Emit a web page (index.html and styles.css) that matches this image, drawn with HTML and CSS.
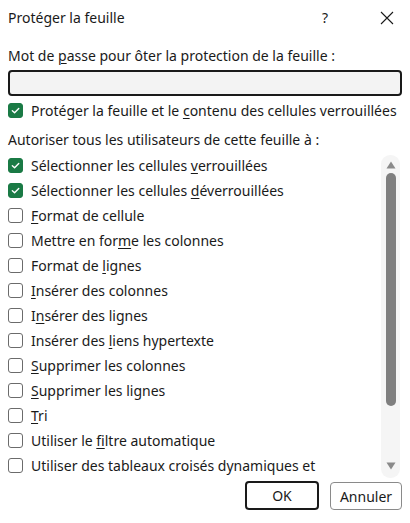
FILE: index.html
```html
<!DOCTYPE html>
<html lang="fr">
<head>
<meta charset="utf-8">
<title>Protéger la feuille</title>
<link rel="stylesheet" href="styles.css">
</head>
<body>
<div class="dialog">
  <div class="titlebar">
    <span class="title">Protéger la feuille</span>
    <span class="help">?</span>
    <span class="close">
      <svg width="14" height="14" viewBox="0 0 14 14"><path d="M1 1 L13 13 M13 1 L1 13" stroke="#1a1a1a" stroke-width="1.1" fill="none"/></svg>
    </span>
  </div>

  <div class="label">Mot de <u>p</u>asse pour ôter la protection de la feuille :</div>
  <div class="input"></div>

  <label class="check-row main-check">
    <span class="box checked"><svg viewBox="0 0 14 14"><path d="M3.6 7.2 L6 9.4 L10.5 4.8" stroke="#fff" stroke-width="1.5" fill="none" stroke-linecap="round" stroke-linejoin="round"/></svg></span>
    <span>Protéger la feuille et le <u>c</u>ontenu des cellules verrouillées</span>
  </label>

  <div class="label allow">Autoriser tous les utilisateurs de cette feuille à :</div>

  <div class="list">
    <div class="items">
      <div class="check-row"><span class="box checked"><svg viewBox="0 0 14 14"><path d="M3.6 7.2 L6 9.4 L10.5 4.8" stroke="#fff" stroke-width="1.5" fill="none" stroke-linecap="round" stroke-linejoin="round"/></svg></span><span>Sélectionner les cellules <u>v</u>errouillées</span></div>
      <div class="check-row"><span class="box checked"><svg viewBox="0 0 14 14"><path d="M3.6 7.2 L6 9.4 L10.5 4.8" stroke="#fff" stroke-width="1.5" fill="none" stroke-linecap="round" stroke-linejoin="round"/></svg></span><span>Sélectionner les cellules <u>d</u>éverrouillées</span></div>
      <div class="check-row"><span class="box"></span><span><u>F</u>ormat de cellule</span></div>
      <div class="check-row"><span class="box"></span><span>Mettre en for<u>m</u>e les colonnes</span></div>
      <div class="check-row"><span class="box"></span><span>Format de <u>l</u>ignes</span></div>
      <div class="check-row"><span class="box"></span><span><u>I</u>nsérer des colonnes</span></div>
      <div class="check-row"><span class="box"></span><span>I<u>n</u>sérer des lignes</span></div>
      <div class="check-row"><span class="box"></span><span>Insérer des <u>l</u>iens hypertexte</span></div>
      <div class="check-row"><span class="box"></span><span><u>S</u>upprimer les colonnes</span></div>
      <div class="check-row"><span class="box"></span><span><u>S</u>upprimer les lignes</span></div>
      <div class="check-row"><span class="box"></span><span><u>T</u>ri</span></div>
      <div class="check-row"><span class="box"></span><span>Utiliser le <u>f</u>iltre automatique</span></div>
      <div class="check-row"><span class="box"></span><span>Utiliser des tableaux croisés dynamiques et</span></div>
    </div>
    <div class="scrollbar">
      <svg class="arrow" width="10" height="8" viewBox="0 0 10 8"><path d="M5 0.5 L9.5 7.5 L0.5 7.5 Z" fill="#8a8a8a"/></svg>
      <div class="track"><div class="thumb"></div></div>
      <svg class="arrow" width="10" height="8" viewBox="0 0 10 8"><path d="M0.5 0.5 L9.5 0.5 L5 7.5 Z" fill="#8a8a8a"/></svg>
    </div>
  </div>

  <div class="buttons">
    <button class="btn primary">OK</button>
    <button class="btn">Annuler</button>
  </div>
</div>
</body>
</html>
```

FILE: styles.css
```css
html, body {
  margin: 0;
  padding: 0;
  background: #fff;
}

.dialog {
  width: 410px;
  height: 523px;
  box-sizing: border-box;
  padding: 0 8px;
  font-family: "Noto Sans", "Open Sans", sans-serif;
  font-size: 14px;
  color: #1a1a1a;
  display: flex;
  flex-direction: column;
}

u {
  text-decoration-thickness: 1px;
  text-underline-offset: 2px;
}

.titlebar {
  height: 35px;
  display: flex;
  align-items: center;
}

.title {
  flex: 1;
  line-height: 1;
}

.help {
  width: 14px;
  font-size: 14px;
  margin-right: 44px;
}

.close {
  width: 22px;
  display: flex;
  align-items: center;
}

.label {
  height: 20px;
  line-height: 20px;
  margin-top: 11px;
}

.input {
  height: 22px;
  margin-top: 4px;
  border: 2px solid #1a1a1a;
  border-radius: 4px;
  background: #f3f3f3;
}

.check-row {
  display: flex;
  align-items: center;
  gap: 8px;
  height: 25px;
  white-space: nowrap;
}

.main-check {
  margin-top: 2px;
}

.label.allow {
  margin-top: 7px;
}

.box {
  width: 13px;
  height: 13px;
  flex: none;
  border: 1px solid #6b6b6b;
  border-radius: 3px;
  background: #fff;
  display: flex;
}

.box.checked {
  background: #1a7a45;
  border-color: #1a7a45;
}

.box svg {
  width: 13px;
  height: 13px;
}

.list {
  margin-top: 3px;
  display: flex;
  height: 325px;
}

.items {
  flex: 1;
  overflow: hidden;
}

.scrollbar {
  width: 19px;
  margin-right: 2px;
  margin-top: 2px;
  background: #f5f5f5;
  border-radius: 9px;
  display: flex;
  flex-direction: column;
  align-items: center;
  padding: 6px 0 8px;
  box-sizing: border-box;
}

.arrow {
  flex: none;
}

.track {
  flex: 1;
  width: 100%;
  display: flex;
  justify-content: center;
  padding-top: 4px;
}

.thumb {
  width: 10px;
  height: 233px;
  background: #7f7f7f;
  border-radius: 5px;
}

.buttons {
  display: flex;
  justify-content: flex-end;
  gap: 11px;
  margin-top: 3px;
}

.btn {
  font-family: "Noto Sans", "Open Sans", sans-serif;
  font-size: 14px;
  color: #1a1a1a;
  background: #fff;
  height: 29px;
  border-radius: 4px;
  padding: 0;
}

.btn.primary {
  width: 74px;
  border: 2px solid #1a1a1a;
}

.btn:not(.primary) {
  width: 72px;
  border: 1px solid #8a8a8a;
  height: 28px;
  margin-top: 1px;
}
```
